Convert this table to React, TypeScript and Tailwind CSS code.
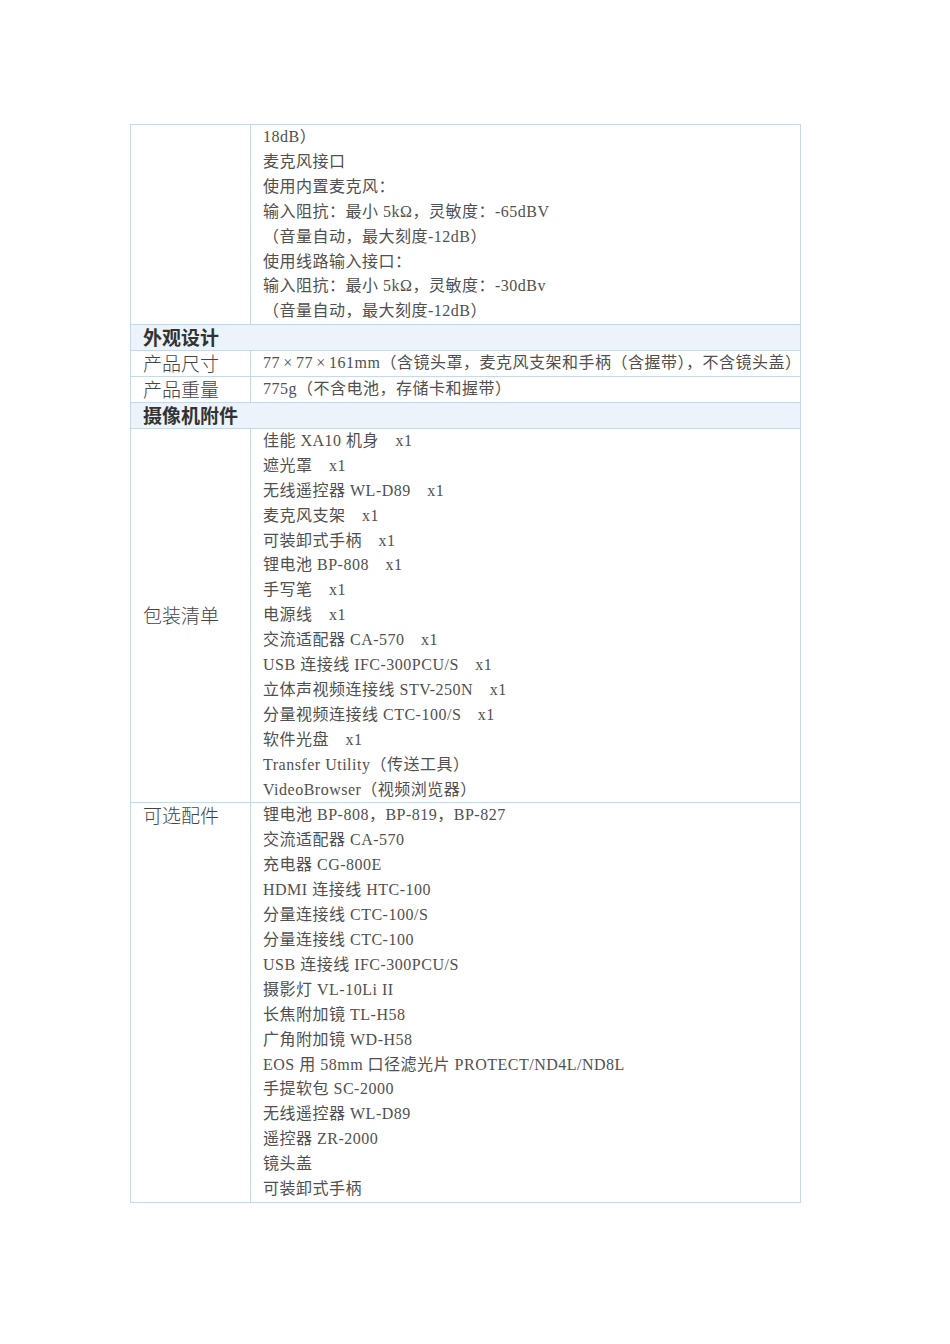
import React from 'react';

const audioLines = [
  '18dB）',
  '麦克风接口',
  '使用内置麦克风：',
  '输入阻抗：最小 5kΩ，灵敏度：-65dBV',
  '（音量自动，最大刻度-12dB）',
  '使用线路输入接口：',
  '输入阻抗：最小 5kΩ，灵敏度：-30dBv',
  '（音量自动，最大刻度-12dB）',
];

const packageList = [
  '佳能 XA10 机身\u3000x1',
  '遮光罩\u3000x1',
  '无线遥控器 WL-D89\u3000x1',
  '麦克风支架\u3000x1',
  '可装卸式手柄\u3000x1',
  '锂电池 BP-808\u3000x1',
  '手写笔\u3000x1',
  '电源线\u3000x1',
  '交流适配器 CA-570\u3000x1',
  'USB 连接线 IFC-300PCU/S\u3000x1',
  '立体声视频连接线 STV-250N\u3000x1',
  '分量视频连接线 CTC-100/S\u3000x1',
  '软件光盘\u3000x1',
  'Transfer Utility（传送工具）',
  'VideoBrowser（视频浏览器）',
];

const optional = [
  '锂电池 BP-808，BP-819，BP-827',
  '交流适配器 CA-570',
  '充电器 CG-800E',
  'HDMI 连接线 HTC-100',
  '分量连接线 CTC-100/S',
  '分量连接线 CTC-100',
  'USB 连接线 IFC-300PCU/S',
  '摄影灯 VL-10Li II',
  '长焦附加镜 TL-H58',
  '广角附加镜 WD-H58',
  'EOS 用 58mm 口径滤光片 PROTECT/ND4L/ND8L',
  '手提软包 SC-2000',
  '无线遥控器 WL-D89',
  '遥控器 ZR-2000',
  '镜头盖',
  '可装卸式手柄',
];

const labelFont = "font-['Noto_Sans_CJK_SC',sans-serif]";
const bodyFont = "font-['Liberation_Serif','Noto_Sans_CJK_SC',serif]";
const cellBorder = 'border border-[#c5d8ec]';

// × is full-width in the original font
function Times() {
  return <span className="inline-block w-4 text-center">×</span>;
}

function Lines({ items }: { items: React.ReactNode[] }) {
  return (
    <div className={`${bodyFont} text-[16px] leading-[24.9px] tracking-[0.5px] text-[#505050] whitespace-pre`}>
      {items.map((t, i) => (
        <div key={i}>{t}</div>
      ))}
    </div>
  );
}

function Heading({ children }: { children: React.ReactNode }) {
  return (
    <tr>
      <td
        colSpan={2}
        className={`${labelFont} ${cellBorder} bg-[#edf3fb] px-3 text-[19px] font-bold leading-[24.9px] text-[#333]`}
      >
        {children}
      </td>
    </tr>
  );
}

function Row({
  label,
  items,
  align = 'top',
}: {
  label?: string;
  items: React.ReactNode[];
  align?: 'top' | 'middle';
}) {
  return (
    <tr>
      <td
        className={`${labelFont} ${cellBorder} px-3 text-[19px] font-light leading-[24.9px] text-[#444] ${
          align === 'middle' ? 'align-middle' : 'align-top'
        }`}
      >
        {label}
      </td>
      <td className={`${cellBorder} px-3 align-top`}>
        <Lines items={items} />
      </td>
    </tr>
  );
}

export default function App() {
  return (
    <div className="min-h-[1344px] w-[950px] bg-white pt-[124px]">
      <table className="ml-[130px] w-[671px] table-fixed border-collapse">
        <colgroup>
          <col className="w-[120px]" />
          <col />
        </colgroup>
        <tbody>
          <Row items={audioLines} />
          <Heading>外观设计</Heading>
          <Row
            label="产品尺寸"
            items={[
              <>
                77<Times />77<Times />161mm（含镜头罩，麦克风支架和手柄（含握带），不含镜头盖）
              </>,
            ]}
          />
          <Row label="产品重量" items={['775g（不含电池，存储卡和握带）']} />
          <Heading>摄像机附件</Heading>
          <Row label="包装清单" items={packageList} align="middle" />
          <Row label="可选配件" items={optional} />
        </tbody>
      </table>
    </div>
  );
}
